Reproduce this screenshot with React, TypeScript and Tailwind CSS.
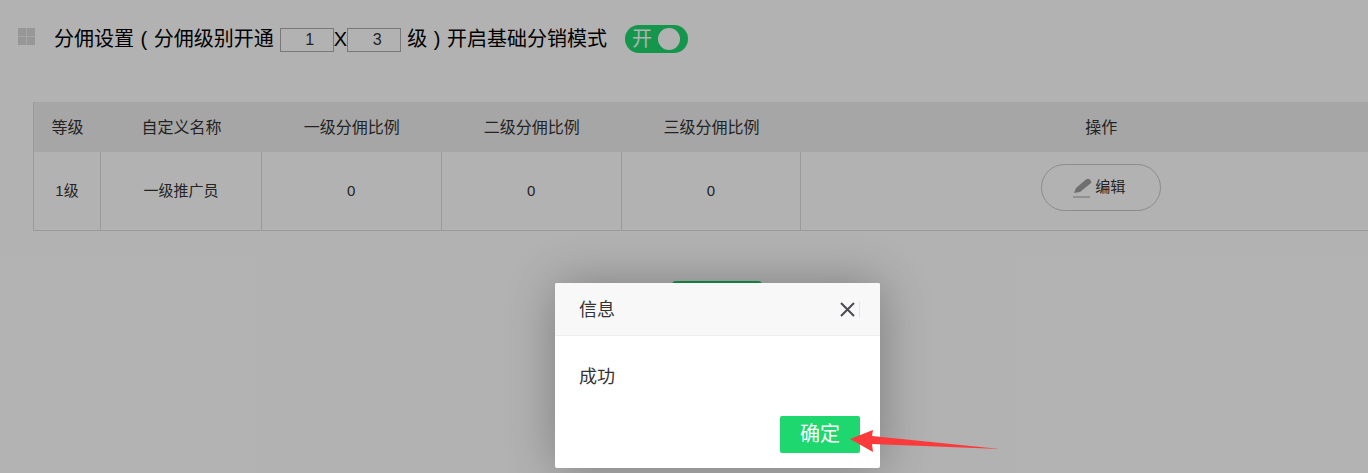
const COLUMNS = [
  { label: "等级", cell: "1级", width: "w-[67px]" },
  { label: "自定义名称", cell: "一级推广员", width: "w-[161px]" },
  { label: "一级分佣比例", cell: "0", width: "w-[180px]" },
  { label: "二级分佣比例", cell: "0", width: "w-[180px]" },
  { label: "三级分佣比例", cell: "0", width: "w-[180px]" },
];

function GridIcon() {
  return (
    <div className="grid h-[17px] w-[17px] grid-cols-2 gap-px bg-[#ececec]">
      <span className="bg-[#d8d8d8]" />
      <span className="bg-[#d8d8d8]" />
      <span className="bg-[#d8d8d8]" />
      <span className="bg-[#d8d8d8]" />
    </div>
  );
}

function LevelInput({ value }: { value: string }) {
  return (
    <span className="mt-[1px] flex h-6 w-[54px] items-center justify-center border border-[#acacac] pl-[6px] text-base text-[#333]">
      {value}
    </span>
  );
}

export default function App() {
  return (
    <div className="relative h-[473px] w-[1368px] overflow-hidden bg-white font-['Liberation_Sans','Noto_Sans_CJK_SC',sans-serif] text-[#333]">
      <div className="flex h-[78px] items-center pl-[18px]">
        <div className="mb-[5px] mr-[19px]">
          <GridIcon />
        </div>
        <span className="text-xl text-black [word-spacing:1px]">分佣设置 ( 分佣级别开通</span>
        <div className="ml-[6px] flex items-center">
          <LevelInput value="1" />
          <span className="text-xl text-black">X</span>
          <LevelInput value="3" />
        </div>
        <span className="ml-[6px] text-xl text-black [word-spacing:1px]">级 ) 开启基础分销模式</span>
        <div className="ml-[18px] flex h-[28px] w-[63px] items-center justify-between rounded-full bg-[#1ed76f] pl-[7px] pr-[8px] text-xl text-white">
          <span>开</span>
          <span className="h-[22px] w-[22px] rounded-full bg-white" />
        </div>
      </div>

      <div className="ml-[33px] mt-[24px] w-[1368px] border-b border-l border-[#ddd] text-[15px]">
        <div className="flex h-[50px] bg-[#eee] pt-[1px] text-base">
          {COLUMNS.map((col) => (
            <div key={col.label} className={`${col.width} flex items-center justify-center`}>
              {col.label}
            </div>
          ))}
          <div className="flex w-[600px] items-center justify-center">操作</div>
        </div>
        <div className="flex h-[78px]">
          {COLUMNS.map((col) => (
            <div
              key={col.label}
              className={`${col.width} flex items-center justify-center border-r border-[#ddd]`}
            >
              {col.cell}
            </div>
          ))}
          <div className="flex w-[600px] justify-center pt-3">
            <button
              type="button"
              className="mr-[1px] flex h-[47px] w-[120px] items-center justify-center gap-[3px] rounded-full border border-[#c9c9c9] bg-white pr-[3px] text-[15px]"
            >
              <svg viewBox="0 0 19 20" className="h-5 w-[19px]">
                <path d="M1 15 3 10 13 1.5Q15 0 17 1.5 19 3.5 17.5 5.5L7 14Z" fill="#a0a0a0" />
                <path d="M0 19H17" stroke="#a0a0a0" strokeWidth="1" fill="none" />
              </svg>
              编辑
            </button>
          </div>
        </div>
      </div>

      <div className="ml-[672px] mt-[50px] h-10 w-[90px] rounded bg-[#1ed76f]" />

      <div className="absolute inset-0 bg-black/30" />

      <div className="absolute left-[555px] top-[283px] flex h-[185px] w-[325px] flex-col rounded-[2px] bg-white shadow-[1px_1px_50px_rgba(0,0,0,0.3)]">
        <div className="flex h-[53px] items-center justify-between rounded-t-[2px] border-b border-[#eee] bg-[#f8f8f8] pl-6 pr-5 pt-[1px]">
          <span className="text-lg text-[#333]">信息</span>
          <div className="flex items-center">
            <svg viewBox="0 0 15 15" className="h-[15px] w-[15px]">
              <path d="M1 1 14 14M14 1 1 14" stroke="#4a4a55" strokeWidth="2" fill="none" />
            </svg>
            <span className="ml-[4px] h-4 w-px bg-[#d8e8f5]" />
          </div>
        </div>
        <div className="px-6 pt-[29px] text-lg leading-[24px] text-[#333]">成功</div>
        <div className="mt-auto flex justify-end pb-[15px] pr-5">
          <button
            type="button"
            className="h-[37px] w-20 rounded-[2px] bg-[#1ed76f] pb-[2px] text-xl text-white"
          >
            确定
          </button>
        </div>
      </div>

      <svg className="absolute left-[848px] top-[428px]" width="156" height="26" viewBox="0 0 156 26">
        <path d="M2 11 25 2 24 8 152 21 24 16 25 24Z" fill="#fb3b3b" />
      </svg>
    </div>
  );
}
